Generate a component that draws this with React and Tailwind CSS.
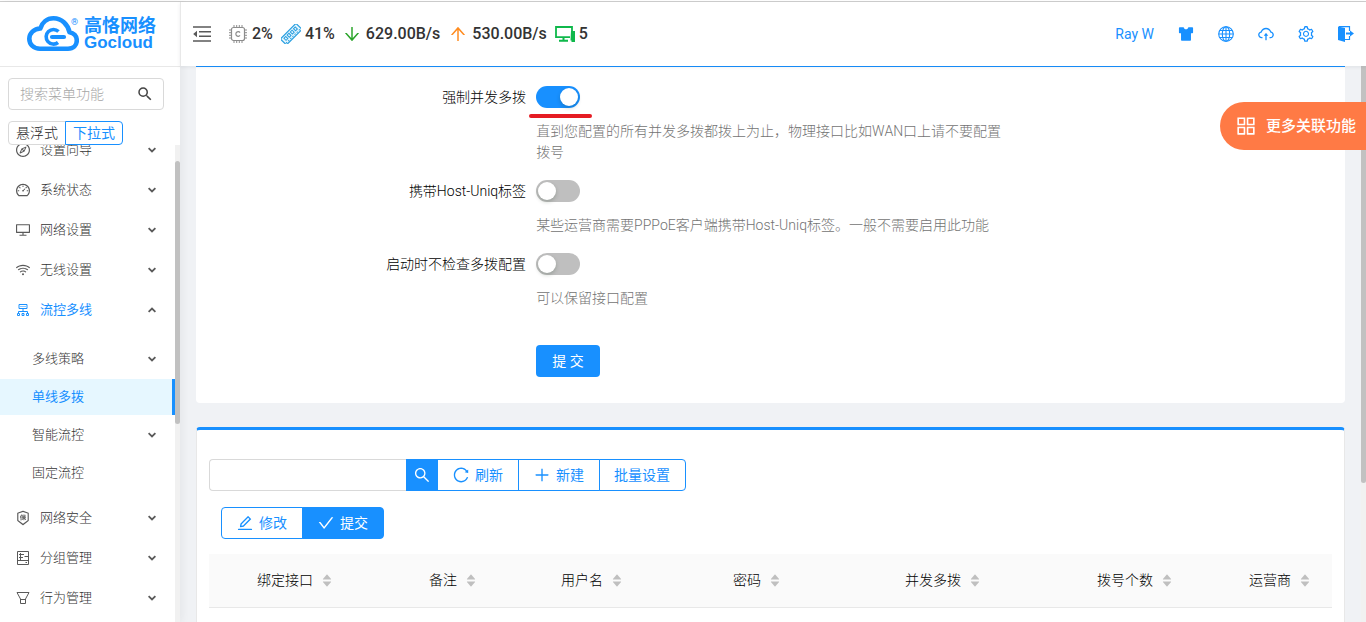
// src/App.jsx
import { useState } from "react";
import clsx from "clsx";
import {
  AiFillCaretDown,
  AiFillCaretUp,
  AiFillSkin,
  AiOutlineAppstore,
  AiOutlineArrowDown,
  AiOutlineArrowUp,
  AiOutlineCheck,
  AiOutlineCloudUpload,
  AiOutlineCompass,
  AiOutlineDashboard,
  AiOutlineDesktop,
  AiOutlineEdit,
  AiOutlineInsurance,
  AiOutlinePlus,
  AiOutlineReload,
  AiOutlineSearch,
  AiOutlineSetting,
  AiOutlineWifi,
} from "react-icons/ai";
import { MdSearch } from "react-icons/md";

const menu = [
  { label: "设置向导", icon: AiOutlineCompass },
  { label: "系统状态", icon: AiOutlineDashboard },
  { label: "网络设置", icon: AiOutlineDesktop },
  { label: "无线设置", icon: AiOutlineWifi },
  {
    label: "流控多线",
    icon: ClusterIcon,
    children: [
      { label: "多线策略", expandable: true },
      { label: "单线多拨" },
      { label: "智能流控", expandable: true },
      { label: "固定流控" },
    ],
  },
  { label: "网络安全", icon: AiOutlineInsurance },
  { label: "分组管理", icon: GroupIcon },
  { label: "行为管理", icon: FunnelIcon },
];

const columns = [
  { title: "绑定接口", width: "w-[172px]" },
  { title: "备注", width: "w-[132px]" },
  { title: "用户名", width: "w-[172px]" },
  { title: "密码", width: "w-[172px]" },
  { title: "并发多拨", width: "w-[192px]" },
  { title: "拨号个数", width: "w-[152px]" },
  { title: "运营商", width: "w-[99px]" },
];

function CloudLogo() {
  return (
    <svg width="52" height="36" viewBox="0 0 52 36" fill="none" stroke="#1890ff">
      <path
        d="M13 32.7h28c5.400 0 8.800-3.600 8.800-8.200 0-4.500-3.200-7.700-7.300-8.300C41 8.800 35 2.300 26.500 2.300c-6.800 0-11.500 4.300-13.200 10.200C7 12.800 2.300 17 2.300 22.800c0 5.700 4.500 9.900 10.700 9.900z"
        strokeWidth="4.600"
        strokeLinejoin="round"
      />
      <path d="M31.500 15.500A7.300 7.300 0 1 0 31 26.500" strokeWidth="3.600" />
      <path d="M25 21h12" strokeWidth="4.200" strokeLinecap="round" />
    </svg>
  );
}

function MenuFoldIcon() {
  return (
    <svg width="18" height="16" viewBox="0 0 18 16" fill="none" stroke="#595959" strokeWidth="1.500">
      <path d="M0 1h18M6 5.700h12M6 10.300h12M0 15h18" />
      <path d="M4 4.800v6.400L.2 8z" fill="#595959" stroke="none" />
    </svg>
  );
}

function ClusterIcon(props) {
  return (
    <svg width="1em" height="1em" viewBox="-1 -1 16 16" fill="none" stroke="currentColor" {...props}>
      <path d="M3 1.500h8v4H3zM7 5.500v3M2.500 10V8.500h9V10" />
      <path d="M1.500 10.500h2v2h-2zM6 10.500h2v2H6zM10.500 10.500h2v2h-2z" />
      <path d="M4 3.500h6" opacity=".5" />
    </svg>
  );
}

function GroupIcon(props) {
  return (
    <svg width="1em" height="1em" viewBox="-1 -1 16 16" fill="none" stroke="currentColor" {...props}>
      <path d="M1.500.5h11v13h-11zM1.500 9.500h11M4.500 2v7" />
      <path d="M3 3.500h5M3 6.500h4M8.500 5.500H12M9.500 11.500H11" />
    </svg>
  );
}

function FunnelIcon(props) {
  return (
    <svg width="1em" height="1em" viewBox="-1 -1 16 16" fill="none" stroke="currentColor" {...props}>
      <path d="M1 1.500h12L9.500 8v4.500h-5V8zM4.500 8.500h5" />
    </svg>
  );
}

function CpuIcon() {
  return (
    <svg width="18" height="18" viewBox="0 0 18 18" fill="none" stroke="#8c8c8c">
      <rect x="2.500" y="2.500" width="13" height="13" rx="2" strokeWidth="1.200" />
      <path d="M5 0v2M7.700 0v2M10.300 0v2M13 0v2M5 16v2M7.700 16v2M10.300 16v2M13 16v2M0 5h2M0 7.700h2M0 10.300h2M0 13h2M16 5h2M16 7.700h2M16 10.300h2M16 13h2" />
      <path d="M11 7.600a2.300 2.300 0 1 0 0 2.800" strokeWidth="1.200" />
    </svg>
  );
}

function MemoryIcon() {
  return (
    <svg width="20" height="20" viewBox="0 0 20 20" fill="none" stroke="#2a9fe0">
      <g transform="rotate(-45 10 10)">
        <rect x="-1" y="6" width="22" height="8.500" rx="1" fill="#e6f6fd" strokeWidth="1.200" />
        <rect x="2" y="8" width="2.500" height="3" />
        <rect x="6.500" y="8" width="2.500" height="3" />
        <rect x="11" y="8" width="2.500" height="3" />
        <rect x="15.500" y="8" width="2.500" height="3" />
        <path d="M0 13h20" strokeDasharray="1.500 1.500" />
      </g>
    </svg>
  );
}

function DevicesIcon() {
  return (
    <svg width="20" height="16" viewBox="0 0 20 16" fill="none" stroke="#0fb84b">
      <path d="M17 5.500V1H1v10.200h14" strokeWidth="1.800" />
      <path d="M8.500 11v3M4 14.800h9" strokeWidth="2" />
      <path d="M16 5h4v11h-3.500v-1.500h-1z" fill="#0fb84b" stroke="none" />
    </svg>
  );
}

function GlobeIcon() {
  return (
    <svg width="16" height="16" viewBox="0 0 16 16" fill="none" stroke="currentColor" strokeWidth="1.100">
      <circle cx="8" cy="8" r="7.300" />
      <ellipse cx="8" cy="8" rx="3.700" ry="7.300" />
      <path d="M8 .7v14.600M.7 8h14.600M1.600 4.500h12.800M1.600 11.500h12.800" />
    </svg>
  );
}

function LogoutIcon() {
  return (
    <svg width="16" height="16" viewBox="0 0 16 16" fill="none" stroke="currentColor">
      <path d="M0 .5 7 2v14L0 14z" fill="currentColor" stroke="none" />
      <path d="M1 .6h10.500V5M7 13.500h4.500V10" strokeWidth="1.200" />
      <path d="M8 7.500h5" strokeWidth="2" />
      <path d="M12 4.500 16 7.500l-4 3z" fill="currentColor" stroke="none" />
    </svg>
  );
}

function Chevron({ up }) {
  return (
    <svg
      width="8"
      height="6"
      viewBox="0 0 8 6"
      fill="none"
      stroke="#595959"
      strokeWidth="1.800"
      className={up ? "rotate-180" : ""}
    >
      <path d="M.6 1.200 4 4.400l3.400-3.200" />
    </svg>
  );
}

function Sidebar() {
  const [mode, setMode] = useState("下拉式");
  const [active, setActive] = useState("单线多拨");

  return (
    <aside className="flex w-[180px] shrink-0 flex-col bg-white shadow-[2px_0_8px_rgba(29,35,41,0.06)]">
      <a
        href="#home"
        className="flex h-[65px] shrink-0 items-center gap-[5px] border-b border-[#e8e8e8] pl-[27px] text-[#1890ff]"
      >
        <span className="relative">
          <CloudLogo />
          <span className="absolute right-px top-0.5 text-[9px] leading-[9px]">®</span>
        </span>
        <span className="flex flex-col font-bold">
          <span className="text-[18px] leading-[18px]">高恪网络</span>
          <span className="font-['Liberation_Sans',sans-serif] text-[17px] leading-4">Gocloud</span>
        </span>
      </a>

      <div className="mx-2 mr-4 mt-[11px] flex h-8 shrink-0 items-center rounded border border-[#d9d9d9] pl-[11px] pr-[9px]">
        <input
          type="text"
          aria-label="搜索菜单功能"
          placeholder="搜索菜单功能"
          className="min-w-0 flex-1 text-[14px] font-light outline-none placeholder:text-[#a6a6a6]"
        />
        <MdSearch className="shrink-0 text-[18px] text-[#444]" />
      </div>

      <div className="mt-[11px] flex shrink-0 pl-2">
        {["悬浮式", "下拉式"].map((name) => (
          <label
            key={name}
            className={clsx(
              "flex h-6 cursor-pointer items-center border px-[7px] text-[14px] leading-[22px] first:rounded-l last:-ml-px last:rounded-r",
              mode === name ? "z-10 border-[#1890ff] text-[#1890ff]" : "border-[#d9d9d9] font-light text-[#262626]"
            )}
          >
            <input
              type="radio"
              name="menu-mode"
              checked={mode === name}
              onChange={() => setMode(name)}
              className="sr-only"
            />
            {name}
          </label>
        ))}
      </div>

      <div className="flex min-h-0 flex-1">
        <nav className="min-w-0 flex-1 overflow-hidden text-[13px] font-light text-[#333]">
          <ul className="-mt-[15px]">
            {menu.map(({ label, icon: Icon, children }) => (
              <li key={label}>
                <button
                  type="button"
                  className={clsx(
                    "flex h-10 w-full items-center gap-[9px] pl-[15px] pr-[19px]",
                    children && "font-normal text-[#1890ff]"
                  )}
                >
                  <Icon className={clsx("text-[16px]", !children && "text-[#595959]")} />
                  <span className="flex-1 text-left">{label}</span>
                  <Chevron up={!!children} />
                </button>
                {children && (
                  <ul className="flex flex-col gap-0.5 pb-[7px] pt-[11px]">
                    {children.map((item) => (
                      <li key={item.label}>
                        <button
                          type="button"
                          onClick={() => setActive(item.label)}
                          className={clsx(
                            "flex h-9 w-full items-center justify-between border-r-[3px] pl-8 pr-4",
                            active === item.label
                              ? "border-[#1890ff] bg-[#e6f7ff] font-normal text-[#1890ff]"
                              : "border-transparent"
                          )}
                        >
                          {item.label}
                          {item.expandable && <Chevron />}
                        </button>
                      </li>
                    ))}
                  </ul>
                )}
              </li>
            ))}
          </ul>
        </nav>
        <div className="w-[5px] bg-[#f1f1f1] pt-4">
          <div className="h-[57%] rounded-sm bg-[#c1c1c1]" />
        </div>
      </div>
    </aside>
  );
}

function Header() {
  return (
    <header className="z-10 flex h-16 shrink-0 items-center border-l border-[#e8e8e8] bg-white pl-3 shadow-[0_1px_4px_rgba(0,21,41,0.08)]">
      <button type="button" aria-label="收起菜单">
        <MenuFoldIcon />
      </button>
      <div className="ml-[18px] flex items-center gap-2 text-[16px] font-medium text-[#333]">
        <span className="flex items-center gap-[5px]">
          <CpuIcon />
          2%
        </span>
        <span className="flex items-center gap-1">
          <MemoryIcon />
          41%
        </span>
        <span className="-ml-px flex items-center gap-1">
          <AiOutlineArrowDown className="text-[20px] text-[#2ca52c]" />
          629.00B/s
        </span>
        <span className="flex items-center gap-1">
          <AiOutlineArrowUp className="text-[20px] text-[#ff8c1f]" />
          530.00B/s
        </span>
        <span className="flex items-center gap-1">
          <DevicesIcon />5
        </span>
      </div>

      <div className="ml-auto flex items-center text-[18px] text-[#1890ff]">
        <a href="#user" className="pr-3 text-[14px]">
          Ray W
        </a>
        <button type="button" aria-label="主题" className="flex w-10 justify-center">
          <AiFillSkin />
        </button>
        <button type="button" aria-label="语言" className="flex w-10 justify-center">
          <GlobeIcon />
        </button>
        <button type="button" aria-label="升级" className="flex w-10 justify-center">
          <AiOutlineCloudUpload />
        </button>
        <button type="button" aria-label="设置" className="flex w-10 justify-center">
          <AiOutlineSetting />
        </button>
        <button type="button" aria-label="退出" className="flex w-10 justify-center">
          <LogoutIcon />
        </button>
      </div>
    </header>
  );
}

function SwitchRow({ id, label, help, defaultOn = false, underline = false }) {
  const [on, setOn] = useState(defaultOn);

  return (
    <div className="flex pb-2 font-light">
      <label htmlFor={id} className="w-7/24 shrink-0 pr-[10px] text-right leading-10 text-black">
        {label}
      </label>
      <div className="w-10/24">
        <div className="relative flex h-10 items-center">
          <button
            id={id}
            type="button"
            role="switch"
            aria-checked={on}
            onClick={() => setOn(!on)}
            className={clsx(
              "flex h-[22px] w-11 items-center rounded-full px-0.5",
              on ? "justify-end bg-[#1890ff]" : "bg-[#bfbfbf]"
            )}
          >
            <span className="size-[18px] rounded-full bg-white shadow-[0_2px_4px_rgba(0,35,11,0.2)]" />
          </button>
          {underline && (
            <span className="absolute -bottom-px -left-[7px] h-1 w-[63px] rounded-full bg-[#e51c23]" />
          )}
        </div>
        <p className="pt-1 leading-[21px] text-[#737373]">{help}</p>
      </div>
    </div>
  );
}

function ToolButton({ icon: Icon, children, primary, className }) {
  return (
    <button
      type="button"
      className={clsx(
        "flex h-8 items-center gap-[5px] border border-[#1890ff] pl-[14px] pr-[15px]",
        primary ? "bg-[#1890ff] text-white" : "bg-white text-[#1890ff]",
        className
      )}
    >
      {Icon && <Icon className="text-[18px]" />}
      {children}
    </button>
  );
}

function LineTable() {
  return (
    <section className="mt-6 flex-1 rounded-t border border-b-0 border-t-[3px] border-[#e8e8e8] border-t-[#1890ff] bg-white px-3 pt-[29px]">
      <div className="flex">
        <input
          type="text"
          aria-label="搜索"
          className="h-8 w-[197px] rounded-l border border-r-0 border-[#d9d9d9] px-3 outline-none"
        />
        <button
          type="button"
          aria-label="搜索"
          className="flex size-8 items-center justify-center bg-[#1890ff] text-[18px] text-white"
        >
          <AiOutlineSearch />
        </button>
        <ToolButton icon={AiOutlineReload} className="-ml-px">
          刷新
        </ToolButton>
        <ToolButton icon={AiOutlinePlus} className="-ml-px">
          新建
        </ToolButton>
        <ToolButton className="-ml-px rounded-r">批量设置</ToolButton>
      </div>

      <div className="mt-4 flex pl-3">
        <ToolButton icon={AiOutlineEdit} className="rounded-l">
          修改
        </ToolButton>
        <ToolButton icon={AiOutlineCheck} primary className="-ml-px rounded-r">
          提交
        </ToolButton>
      </div>

      <table className="mt-[15px] w-full table-fixed">
        <colgroup>
          <col className="w-8" />
          {columns.map((col) => (
            <col key={col.title} className={col.width} />
          ))}
        </colgroup>
        <thead className="bg-[#fafafa] text-black">
          <tr>
            <th className="h-[53px] border-b border-[#e8e8e8]" />
            {columns.map((col) => (
              <th key={col.title} className="border-b border-[#e8e8e8] pl-4 font-light">
                <span className="flex items-center gap-2">
                  {col.title}
                  <span className="flex flex-col text-[12px] text-[#bfbfbf]">
                    <AiFillCaretUp className="-mb-[5px]" />
                    <AiFillCaretDown />
                  </span>
                </span>
              </th>
            ))}
          </tr>
        </thead>
      </table>
    </section>
  );
}

export default function App() {
  return (
    <div className="flex h-screen flex-col overflow-hidden bg-[#f0f2f5] font-['Roboto','Noto_Sans_CJK_SC',sans-serif] text-[14px]">
      <div className="h-0.5 shrink-0 border-b border-[#cfcfcf] bg-white" />
      <div className="flex min-h-0 flex-1">
        <Sidebar />
        <div className="flex min-w-0 flex-1 flex-col">
          <Header />
          <div className="flex min-h-0 flex-1">
            <main className="flex min-w-0 flex-1 flex-col pl-4 pr-4">
              <section className="rounded-b border-t border-[#1890ff] bg-white px-3 pb-[26px] pt-[10px]">
                <SwitchRow
                  id="force-multi"
                  label="强制并发多拨"
                  help="直到您配置的所有并发多拨都拨上为止，物理接口比如WAN口上请不要配置拨号"
                  defaultOn
                  underline
                />
                <SwitchRow
                  id="host-uniq"
                  label="携带Host-Uniq标签"
                  help="某些运营商需要PPPoE客户端携带Host-Uniq标签。一般不需要启用此功能"
                />
                <SwitchRow id="skip-check" label="启动时不检查多拨配置" help="可以保留接口配置" />
                <div className="pl-[29.17%] pt-7">
                  <button type="button" className="h-8 rounded bg-[#1890ff] px-4 text-white">
                    提 交
                  </button>
                </div>
              </section>
              <LineTable />
            </main>
            <div className="w-[5px] bg-[#f1f1f1]">
              <div className="h-3/4 rounded-b-sm bg-[#c1c1c1]" />
            </div>
          </div>
        </div>
      </div>

      <button
        type="button"
        className="fixed right-0 top-[102px] z-20 flex h-12 items-center gap-2 rounded-l-full bg-[#ff7a45] pl-[14px] pr-[10px] text-[15px] font-medium text-white"
      >
        <AiOutlineAppstore className="text-[24px]" />
        更多关联功能
      </button>
    </div>
  );
}
